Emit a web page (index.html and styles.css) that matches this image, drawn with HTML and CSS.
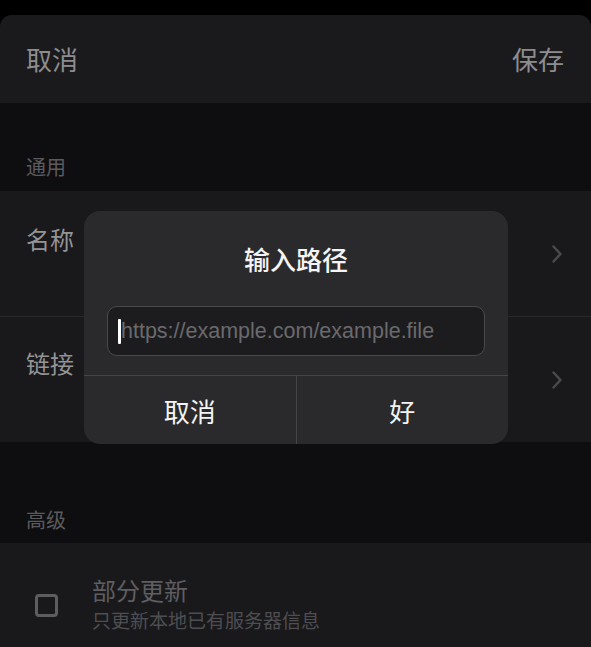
FILE: index.html
```html
<!DOCTYPE html>
<html lang="zh-CN">
<head>
    <meta charset="UTF-8">
    <meta name="viewport" content="width=device-width, initial-scale=1.0">
    <title>编辑</title>
    <link rel="stylesheet" href="styles.css">
</head>
<body>
    <div class="sheet">
        <div class="nav-bar">
            <span class="nav-btn">取消</span>
            <span class="nav-btn">保存</span>
        </div>

        <div class="section-title general">通用</div>
        <div class="group">
            <div class="row">
                <span class="row-label">名称</span>
                <svg class="chevron" width="12" height="20" viewBox="0 0 12 20">
                    <path d="M2.5 2.5 L9.5 10 L2.5 17.5" />
                </svg>
            </div>
            <div class="divider"></div>
            <div class="row">
                <span class="row-label second">链接</span>
                <svg class="chevron" width="12" height="20" viewBox="0 0 12 20">
                    <path d="M2.5 2.5 L9.5 10 L2.5 17.5" />
                </svg>
            </div>
        </div>

        <div class="section-title advanced">高级</div>
        <div class="group">
            <div class="check-row">
                <span class="checkbox"></span>
                <div class="check-text">
                    <div class="check-title">部分更新</div>
                    <div class="check-sub">只更新本地已有服务器信息</div>
                </div>
            </div>
        </div>
    </div>

    <!-- prompt dialog -->
    <div class="dialog">
        <div class="dialog-title">输入路径</div>
        <div class="field">
            <span class="caret"></span>
            <span class="placeholder">https://example.com/example.file</span>
        </div>
        <div class="dialog-actions">
            <button type="button" class="dialog-btn">取消</button>
            <button type="button" class="dialog-btn">好</button>
        </div>
    </div>
</body>
</html>
```

FILE: styles.css
```css
/* Global styles */
body {
    margin: 0;
    padding-top: 15px;
    background-color: #000;
    font-family: "Noto Sans CJK SC", "Noto Sans", sans-serif;
    height: 647px;
    box-sizing: border-box;
    overflow: hidden;
}

.sheet {
    background-color: #0e0e10;
    border-radius: 12px 12px 0 0;
    overflow: hidden;
    height: 632px;
}

.nav-bar {
    height: 88px;
    background-color: #1a1a1c;
    display: flex;
    justify-content: space-between;
    align-items: center;
    padding: 0 27px 0 26px;
}

.nav-btn {
    font-size: 26px;
    line-height: 34px;
    color: #8d8d90;
}

.section-title {
    display: flex;
    align-items: flex-end;
    padding-left: 26px;
    font-size: 20px;
    line-height: 24px;
    color: #5b5b5f;
    box-sizing: border-box;
}

.general {
    height: 88px;
    padding-bottom: 12px;
}

.advanced {
    height: 101px;
    padding-bottom: 11px;
}

.group {
    background-color: #19191b;
}

.row {
    height: 125px;
    display: flex;
    align-items: center;
    justify-content: space-between;
    padding: 0 28px 0 26px;
}

.row-label {
    align-self: flex-start;
    padding-top: 33px;
    font-size: 24px;
    line-height: 30px;
    color: #949497;
}

.row-label.second {
    padding-top: 31px;
}

.chevron path {
    fill: none;
    stroke: #4a4a4d;
    stroke-width: 2.5;
    stroke-linecap: round;
    stroke-linejoin: round;
}

.divider {
    height: 1px;
    background-color: #29292c;
}

.check-row {
    display: flex;
    align-items: flex-start;
    padding: 32px 0 0 35px;
    height: 104px;
    box-sizing: border-box;
}

.checkbox {
    width: 23px;
    height: 23px;
    margin-top: 19px;
    border: 3px solid #5d5d60;
    border-radius: 4px;
    box-sizing: border-box;
    margin-right: 34px;
}

.check-title {
    font-size: 24px;
    line-height: 30px;
    color: #5e5e62;
}

.check-sub {
    font-size: 19px;
    line-height: 30px;
    color: #4e4e52;
}

/* Prompt dialog */
.dialog {
    position: absolute;
    left: 84px;
    top: 211px;
    width: 424px;
    height: 233px;
    background-color: #2a2a2c;
    border-radius: 16px;
    display: flex;
    flex-direction: column;
    overflow: hidden;
}

.dialog-title {
    text-align: center;
    padding-top: 31px;
    font-size: 26px;
    line-height: 34px;
    font-weight: 500;
    color: #f4f4f5;
}

.field {
    margin: 30px 23px 0;
    height: 50px;
    box-sizing: border-box;
    background-color: #1c1c1e;
    border: 1px solid #4a4a4d;
    border-radius: 10px;
    display: flex;
    align-items: center;
    padding-left: 10px;
}

.caret {
    width: 3px;
    height: 25px;
    background-color: #fff;
    border-radius: 1px;
}

.placeholder {
    font-family: "Liberation Sans", Arial, sans-serif;
    font-size: 21.5px;
    color: #6a6a6e;
    margin-left: 0;
}

.dialog-actions {
    margin-top: 19px;
    flex: 1;
    display: flex;
    border-top: 1px solid #454548;
}

.dialog-btn {
    flex: 1;
    background: none;
    border: none;
    font-family: inherit;
    font-size: 26px;
    color: #f4f4f5;
    padding: 0;
}

.dialog-btn + .dialog-btn {
    border-left: 1px solid #454548;
}
```
